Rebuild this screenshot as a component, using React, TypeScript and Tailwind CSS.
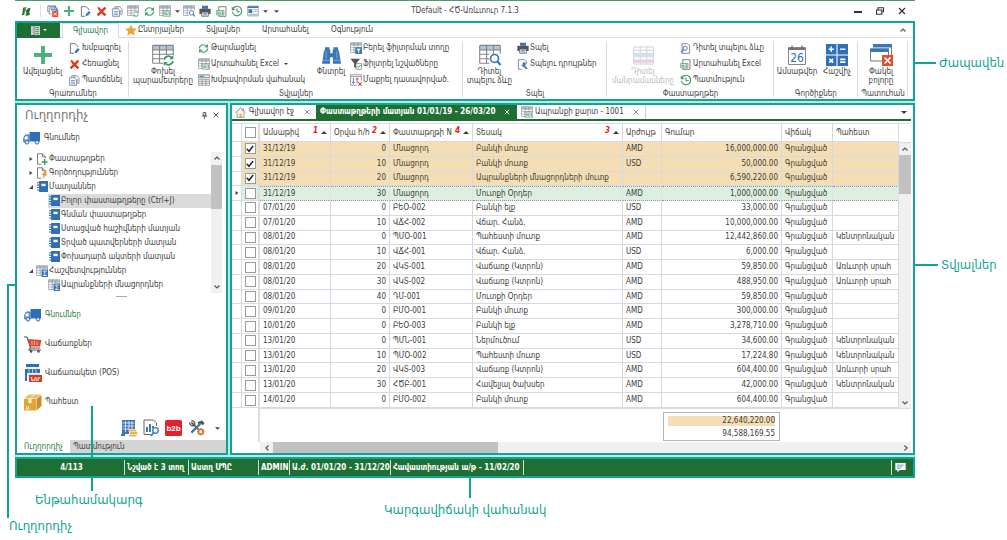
import type { ReactNode } from "react";

/* ---------- icons ---------- */

type IconProps = { className?: string };

function Svg({ className = "size-[11px]", box = "0 0 16 16", children }: IconProps & { box?: string; children: ReactNode }) {
  return (
    <svg viewBox={box} className={`${className} shrink-0`} fill="none" aria-hidden="true">
      {children}
    </svg>
  );
}

const LogoIcon = () => (
  <Svg className="size-[11px]">
    <path d="M3 2.500 8 1.500 4.500 13l-3 .5z" fill="#1f6f35" />
    <path d="M9.500 3.500 14 2.500 11.500 11l2-.3-1 2.300-6 1.500z" fill="#1f6f35" />
    <path d="M7 5.500 9.500 11" stroke="#1f6f35" strokeWidth="1.500" />
    <path d="m4 3.500 2.500-.5L4 11.500" stroke="#7fb08d" strokeWidth=".8" />
  </Svg>
);
const MultiCloseIcon = () => (
  <Svg className="size-[12px]">
    <path d="M1 1.500h10v3M3 4h10v3M5 6.500h9v2" stroke="#4d7bb5" strokeWidth="1.600" />
    <path d="M1 2v7h2M3 4.500V12h3" stroke="#777" />
    <path d="M7 8h8v8H7z" fill="#e0502f" />
    <path d="m9 10 4 4m0-4-4 4" stroke="#fff" strokeWidth="1.300" />
  </Svg>
);
const PlusIcon = ({ className }: IconProps) => (
  <Svg className={className}>
    <path d="M6.300 0h3.400v6.300H16v3.400H9.700V16H6.300V9.700H0V6.300h6.300z" fill="#4caf7d" />
  </Svg>
);
const EditDocIcon = () => (
  <Svg>
    <path d="M12.500 6V4.500L9 1H2v14h5" stroke="#666" strokeWidth="1.300" />
    <path d="m8 15 .8-3.500L13 7.200l2.600 2.600-4.200 4.200z" fill="#3a76b8" />
  </Svg>
);
const RedXIcon = () => (
  <Svg>
    <path d="m2 3 2-2 4 4.500L12.500 1 15 3.500 10.500 8l4.500 4.500-2.500 2.500L8 10.500 3.500 15 1 12.500 5.500 8z" fill="#dd3b1f" />
  </Svg>
);
const CopyIcon = () => (
  <Svg>
    <path d="M4 4V1h7l3.500 3.500V12H12" stroke="#777" strokeWidth="1.200" />
    <path d="M1 4h7l3 3v8H1z" fill="#fff" stroke="#777" strokeWidth="1.200" />
    <path d="M3 8h6M3 10.300h6M3 12.600h6M6 3h4M12 6v4" stroke="#4d86c4" strokeWidth="1.100" />
  </Svg>
);
const TableBase = () => (
  <>
    <path d="M.5 1h15v3H.5z" fill="#b3c4da" />
    <path d="M.5 1v13M5.500 1v13M10.500 1v13M15.500 1v13M.5 1h15M.5 4.300h15M.5 7.500h15M.5 10.700h15M.5 14h15" stroke="#858585" strokeWidth=".8" />
  </>
);
const TableRefreshIcon = ({ className }: IconProps) => (
  <Svg className={className}>
    <TableBase />
    <path d="M8 8h8v8H8z" fill="#fff" />
    <path d="M8.800 11.500a3.200 3.200 0 0 1 5.600-1.500m.8 2.500a3.200 3.200 0 0 1-5.600 1.500" stroke="#3c9c6a" strokeWidth="1.300" />
    <path d="M15.500 8v3h-3zM8.500 16v-3h3z" fill="#3c9c6a" />
  </Svg>
);
const RefreshIcon = () => (
  <Svg>
    <path d="M2 8a6 5.500 0 0 1 10.500-3.500M14 8A6 5.500 0 0 1 3.500 11.500" stroke="#3c9c6a" strokeWidth="1.700" />
    <path d="M14.500 1.500v5h-5zM1.500 14.500v-5h5z" fill="#3c9c6a" />
  </Svg>
);
const TableXlsIcon = () => (
  <Svg className="size-[12px]">
    <TableBase />
    <path d="M5.500 8H16v7H5.500z" fill="#e3f0e9" stroke="#5b8a78" strokeWidth=".8" />
    <path d="m7 10 2 3m0-3-2 3m3.200-3v3h1.300m3-3h-1.300v1.500h1.300V13h-1.300" stroke="#3d7d64" strokeWidth=".8" />
  </Svg>
);
const TableZoomIcon = ({ className = "size-[12px]" }: IconProps) => (
  <Svg className={className}>
    <TableBase />
    <path d="M7.500 7H16v9H7.500z" fill="#fff" />
    <circle cx="11.300" cy="10.500" r="2.900" stroke="#3a76b8" strokeWidth="1.200" fill="#fff" />
    <path d="m13.300 12.600 2.400 2.700" stroke="#3a76b8" strokeWidth="1.600" />
  </Svg>
);
const PrinterIcon = () => (
  <Svg className="size-[12px]">
    <path d="M4 1h8v4H4z" fill="#3a76b8" />
    <path d="M.5 5h15v7h-15z" fill="#555" />
    <path d="M3.500 9.500h9V15h-9z" fill="#fff" stroke="#555" />
    <path d="M5 11.500h6M5 13.200h6" stroke="#3a76b8" />
  </Svg>
);
const XlsDocIcon = () => (
  <Svg>
    <path d="M4 7V1h10.500v14H4v-1.500" stroke="#666" strokeWidth="1.200" />
    <path d="M1 6.500h10.500v6.500H1z" fill="#e3f0e9" stroke="#3c9c6a" />
    <path d="m2.500 8.300 2 3m0-3-2 3m3.200-3v3H7m3-3H8.700v1.500H10v1.500H8.700" stroke="#2e7d55" strokeWidth=".8" />
  </Svg>
);
const HistoryIcon = () => (
  <Svg className="size-[12px]">
    <path d="M2.500 5a6.300 6.300 0 1 1-.7 4" stroke="#3c9c6a" strokeWidth="1.500" />
    <path d="M1 2v5h5z" fill="#3c9c6a" />
    <path d="M8 4.500V9h3.500" stroke="#666" strokeWidth="1.300" />
  </Svg>
);
const LayoutIcon = () => (
  <Svg className="size-[12px]">
    <path d="M1 1.500h14v13H1z" stroke="#888" fill="#fff" />
    <path d="M1 1.500h14v2.500H1zM2 5.500h5v5H2z" fill="#3a76b8" />
    <path d="M8.500 6h5.500M8.500 8.500h5.500M3 12.500h11" stroke="#aebfd6" strokeWidth="1.500" />
  </Svg>
);
const GroupPanelIcon = () => (
  <Svg className="size-[12px]">
    <path d="M.5 1h15v4H.5z" stroke="#777" fill="#dfe6ef" />
    <path d="M2 3h6" stroke="#3a76b8" strokeWidth="1.400" />
    <path d="M.5 7h15v8H.5zM5.500 7v8M10.500 7v8M.5 9.600h15M.5 12.300h15" stroke="#777" strokeWidth=".9" />
  </Svg>
);
const FilterRowIcon = () => (
  <Svg className="size-[12px]">
    <TableBase />
    <path d="M7 7h9v9H7z" fill="#3a76b8" />
    <path d="M8.500 9h6l-2.300 2.600V15l-1.400-1v-2.400z" fill="#fff" />
  </Svg>
);
const FunnelIcon = () => (
  <Svg className="size-[12px]">
    <path d="M.5 1h13l-5 6v7L5.500 12V7z" fill="#555" />
    <path d="M8 7.500h7.500V15H8z" fill="#fff" stroke="#777" />
    <path d="m9.500 11 1.700 1.800 3-3.600" stroke="#3c9c6a" strokeWidth="1.300" />
  </Svg>
);
const ClearSortIcon = () => (
  <Svg className="size-[12px]">
    <path d="M15 9V1H.8v14H9M.8 3.500H15" stroke="#888" strokeWidth="1.100" />
    <path d="M4.500 5.500v7m-1.700-2 1.700 2.200 1.700-2.200" stroke="#3a76b8" strokeWidth="1.200" />
    <path d="M9.500 12.500v-7m-1.700 2L9.500 5.300l1.700 2.200" stroke="#8b4aa5" strokeWidth="1.200" />
    <path d="m11 11 4.500 4.500m0-4.500L11 15.500" stroke="#dd3b1f" strokeWidth="1.400" />
  </Svg>
);
const BinocularsIcon = () => (
  <Svg className="h-[19px] w-[19px]">
    <path d="M2.500 1h3.800v2H7v3h2V3h.7V1h3.800v2.500l.8.500L16 15H9.200V9.500H6.800V15H0L1.700 4l.8-.5z" fill="#3a76b8" />
    <path d="M.6 12h6M9.400 12h6M3.500 4.500v6M12.500 4.500v6" stroke="#7fa8d3" strokeWidth=".8" />
  </Svg>
);
const DetailIcon = () => (
  <Svg className="size-[21px]">
    <path d="M.5 1.500h15v13H.5zM5.500 1.500v13M10.500 1.500v13M.5 4h15M.5 9h15" stroke="#cfcfcf" strokeWidth=".7" />
    <path d="M.5 6h15v2.500H.5z" fill="#cfe1f2" />
    <path d="M.5 11h15v2.500H.5z" fill="#e7cfe0" />
  </Svg>
);
const PreviewIcon = () => (
  <Svg>
    <path d="M3 1h8l3 3v11H3z" stroke="#666" strokeWidth="1.100" />
    <circle cx="7.500" cy="7.500" r="3" stroke="#3a76b8" strokeWidth="1.400" fill="#fff" />
    <path d="m5.300 9.700-3.600 4" stroke="#3a76b8" strokeWidth="1.800" />
  </Svg>
);
const PrintSetupIcon = () => (
  <Svg>
    <path d="M14 7V4l-3-3H2v14h5" stroke="#666" strokeWidth="1.100" />
    <path d="M8 6.500a2.500 2.500 0 1 1 3.600 2.800l3.800 4.200-1.800 1.800-4-4.200A2.600 2.600 0 0 1 6.700 8.200l1.800.6z" fill="#3a76b8" />
  </Svg>
);
const CalendarIcon = () => (
  <svg viewBox="0 0 18 20" className="h-[20px] w-[18px] shrink-0" aria-hidden="true">
    <path d="M.5 2.500h17v17H.5z" fill="#fff" stroke="#888" />
    <path d="M.5 3h17v2H.5z" fill="#777" />
    <path d="M4 .5v3M14 .5v3" stroke="#555" />
    <text x="9" y="16.500" textAnchor="middle" fontSize="12" fill="#2f6fb5" className="font-['DejaVu_Sans_Condensed']">26</text>
  </svg>
);
const CalculatorIcon = () => (
  <svg viewBox="0 0 21 21" className="size-[22px] shrink-0" fill="none" aria-hidden="true">
    <path d="M0 0h10v10H0zM11 0h10v10H11zM0 11h10v10H0zM11 11h10v10H11z" fill="#2f6fb5" />
    <path d="M5 2.500v5M2.500 5h5M13.500 5h5M3.200 14.200l3.600 3.600m0-3.600-3.600 3.600M13.500 14.700h5M13.500 17.300h5" stroke="#fff" strokeWidth="1.500" />
  </svg>
);
const CloseAllIcon = () => (
  <svg viewBox="0 0 23 22" className="h-[22px] w-[23px] shrink-0" fill="none" aria-hidden="true">
    <path d="M3.500 1h18v12" stroke="#777" />
    <path d="M3 0h19v3.500H3z" fill="#3a76b8" />
    <path d="M.5 5h18v12H.5z" fill="#fff" stroke="#777" />
    <path d="M0 4.500h19V8H0z" fill="#3a76b8" />
    <path d="M12 11h11v11H12z" fill="#e0502f" />
    <path d="m14.500 13.500 6 6m0-6-6 6" stroke="#fff" strokeWidth="1.700" />
  </svg>
);
const TruckIcon = () => (
  <svg viewBox="0 0 18 14" className="h-[14px] w-[18px] shrink-0" fill="none" aria-hidden="true">
    <path d="M6.500 1H17v9.500H6.500z" fill="#2f6fb5" />
    <path d="M6 4H2.500L.8 7v4H6z" fill="#8fb4dc" stroke="#2f6fb5" />
    <path d="M2 5.500h2.500V8H1.500z" fill="#fff" />
    <circle cx="4" cy="11.300" r="1.800" fill="#dbe8f5" stroke="#2f6fb5" />
    <circle cx="14" cy="11.300" r="1.800" fill="#dbe8f5" stroke="#2f6fb5" />
  </svg>
);
const CartIcon = () => (
  <svg viewBox="0 0 18 17" className="h-[17px] w-[18px] shrink-0" fill="none" aria-hidden="true">
    <path d="M0 1h3l3.500 11H16M6.500 12 5 14h12" stroke="#555" strokeWidth="1.200" />
    <path d="M3.800 3 17.500 4 16 10.500H6z" fill="#dc4a2e" />
    <path d="M8 5v4M10.500 5v4M13 5.500V9" stroke="#f7c4b8" strokeWidth=".9" />
    <circle cx="7" cy="15.400" r="1.300" fill="#555" />
    <circle cx="14.500" cy="15.400" r="1.300" fill="#555" />
  </svg>
);
const PosIcon = () => (
  <svg viewBox="0 0 18 18" className="size-[18px] shrink-0" fill="none" aria-hidden="true">
    <path d="M2 0h13v3H2zM1 5h15v4H1zM1 9h2v8H1z" fill="#2f6fb5" />
    <path d="M4 3v2M13 3v2M5 5v4M8.500 5v4M12 5v4" stroke="#a9c7e6" />
    <path d="M4 9.500h12V13H4z" fill="#cfe0f1" />
    <path d="M5 11h13v7H5z" fill="#d23a22" />
    <text x="11.500" y="16.700" textAnchor="middle" fontSize="5" fontWeight="700" fill="#fff" className="font-['DejaVu_Sans_Condensed']">ՆՈՐ</text>
  </svg>
);
const BoxIcon = () => (
  <svg viewBox="0 0 18 17" className="h-[17px] w-[18px] shrink-0" fill="none" aria-hidden="true">
    <path d="M0 5h12v11.500H0z" fill="#e0a63c" />
    <path d="m0 4.500 5-4h12.500l-5 4z" fill="#eabb62" />
    <path d="m12.500 5 5-4v11l-5 4.500z" fill="#c98d28" />
    <path d="M4.500 5h3v4h-3z" fill="#fff3d6" />
    <path d="M2.500 15v-3M4.500 15v-3M1.500 15h4M6 4.500l5-4" stroke="#fff3d6" strokeWidth=".8" />
  </svg>
);
const BuildingIcon = () => (
  <svg viewBox="0 0 17 18" className="h-[18px] w-[17px] shrink-0" fill="none" aria-hidden="true">
    <path d="M1 1h13v9H8v5H4v2H0v-2h1z" fill="#3a76b8" />
    <path d="M1.500 4h12M1.500 7h12M1.500 10h7M4.500 2v11M8 2v11M11 2v8" stroke="#dce8f5" strokeWidth=".9" />
    <path d="M8 10.500h7.500v2H8zM9 13h7.500v2H9zM8 15.500h7.500v2H8z" fill="#eeb357" />
  </svg>
);
const ReportIcon = () => (
  <svg viewBox="0 0 17 18" className="h-[18px] w-[17px] shrink-0" fill="none" aria-hidden="true">
    <path d="M13.500 7V4l-3-3H1v14.500h7" stroke="#666" />
    <path d="M3 13V8h2v5zM6 13V5h2v8zM9 9V7h2v2z" fill="#3a76b8" />
    <circle cx="12.500" cy="11.500" r="2.800" stroke="#3a76b8" strokeWidth="1.300" fill="#fff" />
    <path d="m10.500 13.700-2.500 3.200" stroke="#3a76b8" strokeWidth="1.700" />
  </svg>
);
const B2bIcon = () => (
  <svg viewBox="0 0 17 16" className="h-[16px] w-[17px] shrink-0" aria-hidden="true">
    <rect width="17" height="16" rx="1.500" fill="#e5202b" />
    <text x="8.500" y="11" textAnchor="middle" fontSize="8" fontWeight="700" fill="#fff" className="font-['Liberation_Sans']">b2b</text>
  </svg>
);
const ToolsIcon = () => (
  <svg viewBox="0 0 17 17" className="size-[16px] shrink-0" fill="none" aria-hidden="true">
    <path d="M2.500 2.500 11 11" stroke="#555" strokeWidth="1.800" />
    <path d="M.8 2.500a3 3 0 0 0 4.700 3M2.500.8a3 3 0 0 1 3 4.700" stroke="#555" strokeWidth="1.400" />
    <path d="m9 2 5-1.500 2.500 3-1.800 2-2-1.600-2.500.6z" fill="#555" />
    <path d="m12 4-9.500 9.500" stroke="#3a76b8" strokeWidth="2.500" />
    <circle cx="12.500" cy="12.500" r="2.500" stroke="#e0752f" strokeWidth="1.800" fill="#fff" />
    <path d="M12.500 8.500v1.500m0 5v1.500m-4-4H10m5 0h1.500m-6.800-2.800.9.900m3.800 3.800.9.900m0-5.600-.9.900m-3.800 3.800-.9.900" stroke="#e0752f" strokeWidth="1.400" />
  </svg>
);
const BookIcon = () => (
  <Svg className="size-[11px]">
    <path d="M3 0h13v16H3z" fill="#2f6fb5" />
    <path d="M6.500 4h6v3.500h-6z" fill="#fff" />
    <path d="M0 2.500h4M0 6h4M0 9.500h4M0 13h4" stroke="#2f6fb5" strokeWidth="1.500" />
  </Svg>
);
const DocPlusIcon = () => (
  <Svg className="size-[12px]">
    <path d="M12.500 7V5l-4-4H2v14h5M8.500 1v4h4" stroke="#666" strokeWidth="1.100" />
    <path d="M11.500 8v8m-4-4h8" stroke="#3c9c6a" strokeWidth="2" />
  </Svg>
);
const DocBoltIcon = () => (
  <Svg className="size-[12px]">
    <path d="M12.500 6V5l-4-4H2v14h5M8.500 1v4h4" stroke="#666" strokeWidth="1.100" />
    <path d="m11 6 4-.3-2 3.300h2.500L8.500 16l1.800-5H7.500z" fill="#ef9a2d" />
  </Svg>
);
const TableSumIcon = () => (
  <Svg className="size-[12px]">
    <TableBase />
    <path d="M7.500 6H16v10H7.500z" fill="#3a76b8" />
    <path d="M14 8.500V8h-4l2.300 3-2.300 3h4v-.5" stroke="#fff" strokeWidth="1.100" />
  </Svg>
);
const HouseIcon = () => (
  <Svg className="size-[11px]">
    <path d="M3 8v7h10V8" fill="#fdf3df" stroke="#777" />
    <path d="M.8 8.500 8 1.500l7.200 7M12 2v3.500" stroke="#666" strokeWidth="1.300" />
    <path d="M6.500 15v-5h3v5z" fill="#e5a63f" />
  </Svg>
);
const StarIcon = () => (
  <Svg className="size-[12px]">
    <path d="m8 .5 2.300 5.200 5.700.6-4.200 3.800 1.200 5.600-5-2.900-5 2.900 1.200-5.600L0 6.300l5.700-.6z" fill="#f0a232" />
  </Svg>
);
const ChatIcon = () => (
  <Svg className="size-[11px]">
    <path d="M.5 1.500h15v10H7L3.500 15v-3.500h-3z" fill="#fff" />
    <path d="M3 4.500h10M3 7h8M3 9.200h5" stroke="#5f8fc4" strokeWidth="1.200" />
  </Svg>
);
const CrossIcon = ({ className = "size-[7px]" }: IconProps) => (
  <Svg className={className} box="0 0 8 8">
    <path d="m1 1 6 6m0-6L1 7" stroke="currentColor" strokeWidth="1.300" />
  </Svg>
);
const PinIcon = () => (
  <Svg className="size-[7px]" box="0 0 8 8">
    <path d="M2.500.5h3v4h-3zM4.700.5v4M1 4.700h6M4 5v3" stroke="#555" />
  </Svg>
);
const Caret = ({ className = "h-[3px] w-[5px]" }: IconProps) => (
  <Svg className={className} box="0 0 6 3">
    <path d="M0 0h6L3 3z" fill="currentColor" />
  </Svg>
);
const ChevronIcon = ({ turn = "" }: { turn?: string }) => (
  <Svg className={`h-[4px] w-[6px] ${turn}`} box="0 0 6 4">
    <path d="m.5 3.500 2.500-2.500 2.500 2.500" stroke="#555" strokeWidth="1.200" />
  </Svg>
);

/* ---------- ribbon ---------- */

function QuickButton({ label, children }: { label: string; children: ReactNode }) {
  return (
    <button type="button" aria-label={label} className="grid h-3 w-4 place-items-center">
      {children}
    </button>
  );
}

function TitleBar() {
  return (
    <header className="relative flex h-[21px] items-center border-t border-[#4f9a6a] pl-[6px] text-[#444]">
      <LogoIcon />
      <span className="ml-2 mr-1 h-3 w-px bg-[#ddd]" />
      <QuickButton label="Փակել պատուհանները"><MultiCloseIcon /></QuickButton>
      <QuickButton label="Ավելացնել"><PlusIcon className="size-[10px]" /></QuickButton>
      <QuickButton label="Խմբագրել"><EditDocIcon /></QuickButton>
      <QuickButton label="Հեռացնել"><RedXIcon /></QuickButton>
      <QuickButton label="Պատճենել"><CopyIcon /></QuickButton>
      <QuickButton label="Փոխել պարամետրերը"><TableRefreshIcon className="size-[12px]" /></QuickButton>
      <QuickButton label="Թարմացնել"><RefreshIcon /></QuickButton>
      <QuickButton label="Արտահանել Excel"><TableXlsIcon /></QuickButton>
      <span className="grid w-2 place-items-center"><Caret /></span>
      <QuickButton label="Դիտել"><TableZoomIcon /></QuickButton>
      <QuickButton label="Տպել"><PrinterIcon /></QuickButton>
      <QuickButton label="Արտահանել"><XlsDocIcon /></QuickButton>
      <QuickButton label="Պատմություն"><HistoryIcon /></QuickButton>
      <QuickButton label="Տեսք"><LayoutIcon /></QuickButton>
      <span className="grid w-2 place-items-center"><Caret /></span>
      <span className="ml-[3px] grid w-2 place-items-center"><Caret /></span>
      <h1 className="pointer-events-none absolute inset-x-0 text-center text-[8px] leading-3">TDefault - ՀԾ-Առևտուր 7.1.3</h1>
      <div className="ml-auto flex items-center gap-[14px] pr-[9px] text-[#333]">
        <button type="button" aria-label="Ծալել" className="h-1 w-2 border-b-2 border-[#333]" />
        <button type="button" aria-label="Վերականգնել">
          <Svg className="size-[8px]" box="0 0 8 8">
            <path d="M2 2.500V.7h5.500v4H6M.5 3h5.300v4.300H.5z" stroke="currentColor" strokeWidth="1.100" />
          </Svg>
        </button>
        <button type="button" aria-label="Փակել"><CrossIcon className="size-[8px]" /></button>
      </div>
    </header>
  );
}

function RibbonTabs() {
  return (
    <nav className="flex h-[15px] items-center border-b border-[#dcdcdc] leading-3">
      <button type="button" aria-label="Ընտրացանկ" className="flex h-[15px] w-[43px] items-center justify-center gap-[3px] bg-[#1f6f35] text-white">
        <Svg className="size-[9px]" box="0 0 9 9">
          <path d="M0 0h9v9H0z" fill="#c9cfca" />
          <path d="M3 0v9M4.500 1.500h3.500M4.500 3.500h3.500M4.500 5.500h3.500M4.500 7.500h3.500" stroke="#6a756d" strokeWidth=".8" />
        </Svg>
        <Caret className="h-[2px] w-[4px]" />
      </button>
      <a href="#home" className="ml-[2px] flex h-[15px] w-[57px] items-center justify-center border-x border-t border-[#dcdcdc] bg-white text-[#1f7a3c]">Գլխավոր</a>
      <a href="#favorites" className="ml-[6px] flex w-[63px] items-center gap-[1px]"><StarIcon />Ընտրյալներ</a>
      <a href="#data" className="ml-[18px] w-[38px]">Տվյալներ</a>
      <a href="#export" className="ml-[18px] w-[51px]">Արտահանել</a>
      <a href="#help" className="ml-[18px]">Օգնություն</a>
      <button type="button" aria-label="Ծալել ժապավենը" className="ml-auto mr-[7px]"><ChevronIcon /></button>
    </nav>
  );
}

function BigButton({ icon, lines, width, muted }: { icon: ReactNode; lines: string[]; width: string; muted?: boolean }) {
  return (
    <button type="button" disabled={muted} className={`flex shrink-0 flex-col items-center pt-[5px] ${width} ${muted ? "text-[#bbb]" : ""}`}>
      <span className="grid h-[24px] place-items-center">{icon}</span>
      {lines.map((line) => (
        <span key={line} className="whitespace-nowrap leading-[9px]">{line}</span>
      ))}
    </button>
  );
}

function SmallButtons({ width, items }: { width: string; items: { icon: ReactNode; text: string; caret?: boolean }[] }) {
  return (
    <div className={`flex shrink-0 flex-col pt-[2px] ${width}`}>
      {items.map((item) => (
        <button key={item.text} type="button" className="flex h-4 items-center gap-[1px] whitespace-nowrap text-left">
          <span className="grid w-[13px] shrink-0 place-items-center">{item.icon}</span>
          {item.text}
          {item.caret && <span className="ml-[4px]"><Caret className="h-[2px] w-[4px]" /></span>}
        </button>
      ))}
    </div>
  );
}

function RibbonGroup({ caption, className, children }: { caption: string; className: string; children: ReactNode }) {
  return (
    <section className={`relative flex shrink-0 flex-col after:absolute after:top-[3px] after:right-0 after:bottom-[2px] after:w-px after:bg-[#dcdcdc] ${className}`}>
      <div className="flex h-[50px]">{children}</div>
      <h2 className="text-center leading-[11px]">{caption}</h2>
    </section>
  );
}

function Ribbon() {
  return (
    <section className="relative border-2 border-[#0ea594] bg-white text-[8px] text-[#3c3c3c]">
      <RibbonTabs />
      <div className="flex h-[61px]">
        <RibbonGroup caption="Գրառումներ" className="w-[112px]">
          <BigButton width="w-[51px]" icon={<PlusIcon className="size-[18px]" />} lines={["Ավելացնել"]} />
          <SmallButtons
            width="w-[60px]"
            items={[
              { icon: <EditDocIcon />, text: "Խմբագրել" },
              { icon: <RedXIcon />, text: "Հեռացնել" },
              { icon: <CopyIcon />, text: "Պատճենել" },
            ]}
          />
        </RibbonGroup>
        <RibbonGroup caption="Տվյալներ" className="w-[334px]">
          <BigButton width="w-[68px]" icon={<TableRefreshIcon className="size-[22px]" />} lines={["Փոխել", "պարամետրերը"]} />
          <SmallButtons
            width="w-[116px]"
            items={[
              { icon: <RefreshIcon />, text: "Թարմացնել" },
              { icon: <TableXlsIcon />, text: "Արտահանել Excel", caret: true },
              { icon: <GroupPanelIcon />, text: "Խմբավորման վահանակ" },
            ]}
          />
          <BigButton width="w-[36px]" icon={<BinocularsIcon />} lines={["Փնտրել"]} />
          <SmallButtons
            width="w-[112px]"
            items={[
              { icon: <FilterRowIcon />, text: "Բերել ֆիլտրման տողը" },
              { icon: <FunnelIcon />, text: "Ֆիլտրել նշվածները" },
              { icon: <ClearSortIcon />, text: "Մաքրել դասավորված." },
            ]}
          />
        </RibbonGroup>
        <RibbonGroup caption="Տպել" className="w-[144px]">
          <BigButton width="w-[53px]" icon={<TableZoomIcon className="size-[22px]" />} lines={["Դիտել", "տպելու ձևը"]} />
          <SmallButtons
            width="w-[90px]"
            items={[
              { icon: <PrinterIcon />, text: "Տպել" },
              { icon: <PrintSetupIcon />, text: "Տպելու դրույթներ" },
            ]}
          />
        </RibbonGroup>
        <RibbonGroup caption="Փաստաթղթեր" className="w-[167px]">
          <BigButton width="w-[72px]" icon={<DetailIcon />} lines={["Դիտել", "մանրամասները"]} muted />
          <SmallButtons
            width="w-[94px]"
            items={[
              { icon: <PreviewIcon />, text: "Դիտել տպելու ձևը" },
              { icon: <XlsDocIcon />, text: "Արտահանել Excel" },
              { icon: <HistoryIcon />, text: "Պատմություն" },
            ]}
          />
        </RibbonGroup>
        <RibbonGroup caption="Գործիքներ" className="w-[84px]">
          <BigButton width="w-[46px]" icon={<CalendarIcon />} lines={["Ամսաթվեր"]} />
          <BigButton width="w-[34px]" icon={<CalculatorIcon />} lines={["Հաշվիչ"]} />
        </RibbonGroup>
        <RibbonGroup caption="Պատուհան" className="w-[50px]">
          <BigButton width="w-[46px]" icon={<CloseAllIcon />} lines={["Փակել", "բոլորը"]} />
        </RibbonGroup>
      </div>
      <Callout className="top-[32px] left-full" line="h-[2px] w-[23px]" text="Ժապավեն" />
    </section>
  );
}

function Callout({ className, line, text }: { className: string; line: string; text: string }) {
  return (
    <div className={`absolute flex items-center gap-[3px] whitespace-nowrap text-[13px] leading-4 text-[#0ea594] ${className}`}>
      <span className={`bg-[#0ea594] ${line}`} />
      {text}
    </div>
  );
}

/* ---------- navigator ---------- */

const tree = [
  { text: "Փաստաթղթեր", icon: <DocPlusIcon />, mark: "closed" },
  { text: "Գործողություններ", icon: <DocBoltIcon />, mark: "closed" },
  { text: "Մատյաններ", icon: <BookIcon />, mark: "open" },
  { text: "Բոլոր փաստաթղթերը (Ctrl+J)", icon: <BookIcon />, selected: true },
  { text: "Գնման փաստաթղթեր", icon: <BookIcon /> },
  { text: "Ստացված հաշիվների մատյան", icon: <BookIcon /> },
  { text: "Տրված պատվերների մատյան", icon: <BookIcon /> },
  { text: "Փոխադարձ ակտերի մատյան", icon: <BookIcon /> },
  { text: "Հաշվետվություններ", icon: <TableSumIcon />, mark: "open" },
  { text: "Ապրանքների մնացորդներ", icon: <TableSumIcon /> },
];

const subsystems = [
  { text: "Գնումներ", icon: <TruckIcon />, active: true },
  { text: "Վաճառքներ", icon: <CartIcon /> },
  { text: "Վաճառակետ (POS)", icon: <PosIcon /> },
  { text: "Պահեստ", icon: <BoxIcon /> },
];

function Navigator() {
  return (
    <aside className="relative flex w-[213px] shrink-0 flex-col border-2 border-[#0ea594] bg-white text-[8px] leading-3 text-[#3c3c3c]">
      <div className="flex h-5 items-center pl-[8px] pr-[7px]">
        <h2 className="flex-1 text-[13px] leading-5 text-[#777]">Ուղղորդիչ</h2>
        <button type="button" aria-label="Ամրացնել" className="mr-[5px]"><PinIcon /></button>
        <button type="button" aria-label="Փակել" className="text-[#555]"><CrossIcon className="size-[6px]" /></button>
      </div>
      <div className="flex h-[27px] items-center gap-[3px] pl-[6px]"><TruckIcon />Գնումներ</div>
      <div className="flex h-[143px]">
        <ul className="flex-1 pl-[9px]">
          {tree.map((node) => (
            <li key={node.text} className={`flex h-[14px] items-center ${node.mark ? "" : "pl-[22px]"}`}>
              {node.mark && (
                <span className="grid w-[10px] shrink-0 place-items-center">
                  <Svg className="size-[4px]" box="0 0 4 4">
                    <path d={node.mark === "open" ? "M4 0v4H0z" : "M0.500 0 3.500 2 .5 4z"} fill="#444" />
                  </Svg>
                </span>
              )}
              <span className={`flex h-[14px] flex-1 items-center gap-[1px] whitespace-nowrap ${node.selected ? "bg-[#dadada]" : ""}`}>
                <span className="grid w-[12px] shrink-0 place-items-center">{node.icon}</span>
                {node.text}
              </span>
            </li>
          ))}
        </ul>
        <div className="mr-[4px] flex w-[11px] flex-col items-center justify-between bg-[#f0f0f0]">
          <span className="grid h-[13px] place-items-center"><ChevronIcon /></span>
          <span className="mb-auto h-[44px] w-full bg-[#c1c1c1]" />
          <span className="grid h-[11px] place-items-center"><ChevronIcon turn="rotate-180" /></span>
        </div>
      </div>
      <div className="mx-auto mt-[3px] h-px w-[11px] bg-[#aaa]" />
      <ul className="pt-[4px]">
        {subsystems.map((item) => (
          <li key={item.text} className={`flex h-[29px] items-center gap-[3px] pl-[7px] ${item.active ? "text-[#1f7a3c]" : ""}`}>
            <span className="grid w-[18px] place-items-center">{item.icon}</span>
            {item.text}
          </li>
        ))}
      </ul>
      <div className="mt-auto flex h-[24px] items-center justify-end gap-[5px] pr-[6px]">
        <button type="button" aria-label="Դրամարկղ"><BuildingIcon /></button>
        <button type="button" aria-label="Հաշվետվություն"><ReportIcon /></button>
        <button type="button" aria-label="b2b"><B2bIcon /></button>
        <button type="button" aria-label="Գործիքներ" className="ml-[2px]"><ToolsIcon /></button>
        <button type="button" aria-label="Ավելին" className="ml-[5px]"><Caret /></button>
      </div>
      <div className="flex h-[13px] bg-[#d4d4d4]">
        <button type="button" className="w-[53px] bg-white text-[#1f7a3c]">Ուղղորդիչ</button>
        <button type="button" className="px-[3px]">Պատմություն</button>
      </div>
      <div className="absolute top-[301px] left-[74px] h-[85px] w-[2px] bg-[#0ea594]" />
      <div className="absolute top-[385px] left-[18px] whitespace-nowrap text-[13px] leading-5 text-[#0ea594]">Ենթահամակարգ</div>
      <div className="absolute top-[179px] -left-[10px] h-[234px] w-2 border-t-2 border-l-2 border-[#0ea594]" />
      <div className="absolute top-[411px] -left-[8px] whitespace-nowrap text-[13px] leading-5 text-[#0ea594]">Ուղղորդիչ</div>
    </aside>
  );
}

/* ---------- data grid ---------- */

type Row = [string, number, string, string, string, string, string];

const rows: Row[] = [
  ["31/12/19", 0, "Մնացորդ", "Բանկի մուտք", "AMD", "16,000,000.00", ""],
  ["31/12/19", 10, "Մնացորդ", "Բանկի մուտք", "USD", "50,000.00", ""],
  ["31/12/19", 20, "Մնացորդ", "Ապրանքների մնացորդների մուտք", "", "6,590,220.00", ""],
  ["31/12/19", 30, "Մնացորդ", "Մուտքի Օրդեր", "AMD", "1,000,000.00", ""],
  ["07/01/20", 0, "ԲԵՕ-002", "Բանկի ելք", "USD", "33,000.00", ""],
  ["07/01/20", 10, "ՎՃՀ-002", "Վճար. Հանձ.", "AMD", "10,000,000.00", ""],
  ["08/01/20", 0, "ՊՄՕ-001", "Պահեստի մուտք", "AMD", "12,442,860.00", "Կենտրոնական"],
  ["08/01/20", 10, "ՎՃՀ-001", "Վճար. Հանձ.", "USD", "6,000.00", ""],
  ["08/01/20", 20, "ՎԿՏ-001", "Վաճառք (Կտրոն)", "AMD", "59,850.00", "Առևտրի սրահ"],
  ["08/01/20", 30, "ՎԿՏ-002", "Վաճառք (Կտրոն)", "AMD", "488,950.00", "Առևտրի սրահ"],
  ["08/01/20", 40, "ԴՄ-001", "Մուտքի Օրդեր", "AMD", "59,850.00", ""],
  ["09/01/20", 0, "ԲՄՕ-001", "Բանկի մուտք", "AMD", "300,000.00", ""],
  ["10/01/20", 0, "ԲԵՕ-003", "Բանկի ելք", "AMD", "3,278,710.00", ""],
  ["13/01/20", 0, "ՊՄՆ-001", "Ներմուծում", "USD", "34,600.00", "Կենտրոնական"],
  ["13/01/20", 10, "ՊՄՕ-002", "Պահեստի մուտք", "USD", "17,224.80", "Կենտրոնական"],
  ["13/01/20", 20, "ՎԿՏ-003", "Վաճառք (Կտրոն)", "AMD", "604,400.00", "Առևտրի սրահ"],
  ["13/01/20", 30, "ՀԾԲ-001", "Հավելյալ ծախսեր", "AMD", "42,000.00", "Կենտրոնական"],
  ["14/01/20", 0, "ԲՄՕ-002", "Բանկի մուտք", "AMD", "604,400.00", ""],
];

const columns = [
  { title: "Ամսաթիվ", order: "1" },
  { title: "Օրվա հ/հ", order: "2" },
  { title: "Փաստաթղթի N", order: "4" },
  { title: "Տեսակ", order: "3" },
  { title: "Արժույթ" },
  { title: "Գումար" },
  { title: "Վիճակ" },
  { title: "Պահեստ" },
];

function CheckBox({ label, checked }: { label: string; checked?: boolean }) {
  return (
    <label className="grid place-items-center">
      <input type="checkbox" aria-label={label} defaultChecked={checked} className="peer col-start-1 row-start-1 size-[11px] appearance-none border border-[#9a9a9a] bg-white" />
      <svg viewBox="0 0 8 8" fill="none" className="pointer-events-none invisible col-start-1 row-start-1 size-[8px] peer-checked:visible">
        <path d="m.8 3.800 2.200 2.500L7.200 1" stroke="#222" strokeWidth="1.400" />
      </svg>
    </label>
  );
}

const cell = "overflow-hidden whitespace-nowrap border-b border-r border-[#d5dae2] px-[3px] py-0";

function DataTable() {
  return (
    <table className="h-[284px] w-full table-fixed border-separate border-spacing-0 leading-3">
      <colgroup>
        <col className="w-[10px]" />
        <col className="w-[18px]" />
        <col className="w-[71px]" />
        <col className="w-[59px]" />
        <col className="w-[83px]" />
        <col className="w-[150px]" />
        <col className="w-[39px]" />
        <col className="w-[120px]" />
        <col className="w-[51px]" />
        <col />
      </colgroup>
      <thead>
        <tr className="h-[18px] text-left">
          <td className={cell} />
          <td className="border-r-2 border-b border-[#dcdcdc] p-0"><CheckBox label="Նշել բոլորը" /></td>
          {columns.map((column) => (
            <th key={column.title} className={`${cell} font-normal`}>
              <span className="flex items-center">
                {column.title}
                {column.order && (
                  <span className="ml-auto flex items-center gap-[3px]">
                    <span className="mb-[4px] text-[8px] leading-[8px] font-bold text-[#f01818] italic">{column.order}</span>
                    <Caret className="h-[3px] w-[6px] rotate-180" />
                  </span>
                )}
              </span>
            </th>
          ))}
        </tr>
      </thead>
      <tbody>
        {rows.map(([date, order, doc, kind, currency, amount, store], index) => {
          const marked = index < 3;
          const current = index === 3;
          const line = current ? "border-y border-dotted !border-y-[#8d9a90]" : "";
          const tone = marked ? "bg-[#f5deb3]" : current ? "bg-[#dcefe0]" : "";
          return (
            <tr key={index} className="h-[14px]">
              <td className={cell}>
                {current && (
                  <Svg className="size-[4px]" box="0 0 4 4"><path d="M0.500 0 3.500 2 .5 4z" fill="#444" /></Svg>
                )}
              </td>
              <td className={`border-r-2 border-b border-[#dcdcdc] p-0 ${tone}`}><CheckBox label={`${date} ${doc}`} checked={marked} /></td>
              <td className={`${cell} ${tone} ${line}`}>{date}</td>
              <td className={`${cell} ${tone} ${line} text-right`}>{order}</td>
              <td className={`${cell} ${tone} ${line}`}>{doc}</td>
              <td className={`${cell} ${tone} ${line}`}>{kind}</td>
              <td className={`${cell} ${tone} ${line}`}>{currency}</td>
              <td className={`${cell} ${tone} ${line} text-right`}>{amount}</td>
              <td className={`${cell} ${tone} ${line}`}>Գրանցված</td>
              <td className={`${cell} ${tone} ${line}`}>{store}</td>
            </tr>
          );
        })}
      </tbody>
    </table>
  );
}

function DocumentTabs() {
  return (
    <div className="flex h-4 items-center border-b-2 border-[#1f6f35] leading-3">
      <button type="button" className="flex w-[84px] items-center gap-[3px] whitespace-nowrap pl-[3px]">
        <HouseIcon />Գլխավոր էջ<span className="ml-auto mr-[6px] text-[#888]"><CrossIcon className="size-[6px]" /></span>
      </button>
      <button type="button" className="flex h-[15px] w-[201px] items-center whitespace-nowrap bg-[#1f6f35] px-[4px] font-bold text-white">
        Փաստաթղթերի մատյան 01/01/19 - 26/03/20<span className="ml-auto mr-[3px]"><CrossIcon className="size-[6px]" /></span>
      </button>
      <button type="button" className="flex h-[13px] w-[129px] items-center gap-[2px] whitespace-nowrap border-r border-[#ccc] pl-[4px]">
        <TableXlsIcon />Ապրանքի քարտ - 1001<span className="ml-auto mr-[6px] text-[#888]"><CrossIcon className="size-[6px]" /></span>
      </button>
      <button type="button" aria-label="Բոլոր էջերը" className="ml-auto mr-[4px]"><Caret className="h-[3px] w-[6px]" /></button>
    </div>
  );
}

function DataArea() {
  return (
    <main className="relative flex min-w-0 flex-1 flex-col border-2 border-[#0ea594] bg-white pr-[2px] text-[8px] text-[#3c3c3c]">
      <DocumentTabs />
      <div className="mt-[2px] flex border-t border-[#dcdcdc]">
        <div className="min-w-0 flex-1"><DataTable /></div>
        <div className="flex w-[12px] flex-col items-center bg-[#f0f0f0]">
          <span className="h-[19px] w-full border-b border-[#d5dae2] bg-white" />
          <span className="grid h-[12px] place-items-center"><ChevronIcon /></span>
          <span className="mb-auto h-[39px] w-full bg-[#c1c1c1]" />
          <span className="grid h-[11px] place-items-center"><ChevronIcon turn="rotate-180" /></span>
        </div>
      </div>
      <div className="ml-[26px] flex-1 border-t border-l-2 border-[#dcdcdc]">
        <div className="mt-[3px] ml-[403px] flex h-[29px] w-[117px] flex-col border border-[#b5b5b5] px-[4px] pt-[3px] text-right">
          <span className="h-[10px] bg-[#f5deb3] leading-[10px]">22,640,220.00</span>
          <span className="h-[13px] leading-[15px]">94,588,169.55</span>
        </div>
      </div>
      <div className="ml-[28px] flex h-[11px] items-center bg-[#f0f0f0]">
        <span className="grid w-[13px] place-items-center"><ChevronIcon turn="-rotate-90" /></span>
        <span className="h-full w-[225px] bg-[#c1c1c1]" />
        <span className="ml-auto grid w-[11px] place-items-center"><ChevronIcon turn="rotate-90" /></span>
      </div>
      <Callout className="top-[152px] left-full" line="h-[2px] w-[25px]" text="Տվյալներ" />
    </main>
  );
}

/* ---------- status bar ---------- */

function StatusBar() {
  const field = "flex h-[15px] items-center whitespace-nowrap border-r border-[#cfe0d3] pl-[2px]";
  return (
    <footer className="relative flex h-[21px] items-center border-2 border-[#0ea594] bg-[#1f6f35] text-[8px] font-bold text-white">
      <span className={`${field} w-[108px] justify-center`}>4/113</span>
      <span className={`${field} w-[64px]`}>Նշված է 3 տող</span>
      <span className={`${field} w-[70px]`}>Աստղ ՍՊԸ</span>
      <span className={`${field} w-[31px]`}>ADMIN</span>
      <span className={`${field} w-[101px]`}>Ա.Ժ. 01/01/20 - 31/12/20</span>
      <span className={`${field} w-[133px]`}>Հավաստիության ա/թ - 11/02/20</span>
      <span className="ml-auto flex h-[15px] items-center border-l border-[#cfe0d3] pl-[3px] pr-[7px]"><ChatIcon /></span>
      <div className="absolute top-[19px] left-[452px] h-5 w-[2px] bg-[#0ea594]" />
      <div className="absolute top-[41px] left-[367px] whitespace-nowrap text-[13px] leading-5 font-normal text-[#0ea594]">Կարգավիճակի վահանակ</div>
    </footer>
  );
}

export default function App() {
  return (
    <div className="min-h-screen bg-white pr-[92px] pl-[15px] font-['DejaVu_Sans_Condensed','DejaVu_Sans',sans-serif]">
      <div className="flex min-w-[900px] flex-col">
        <TitleBar />
        <div className="flex flex-col gap-[2px] bg-[#bfe6e1]">
          <Ribbon />
          <div className="flex h-[352px] gap-[2px]">
            <Navigator />
            <DataArea />
          </div>
          <StatusBar />
        </div>
      </div>
    </div>
  );
}
